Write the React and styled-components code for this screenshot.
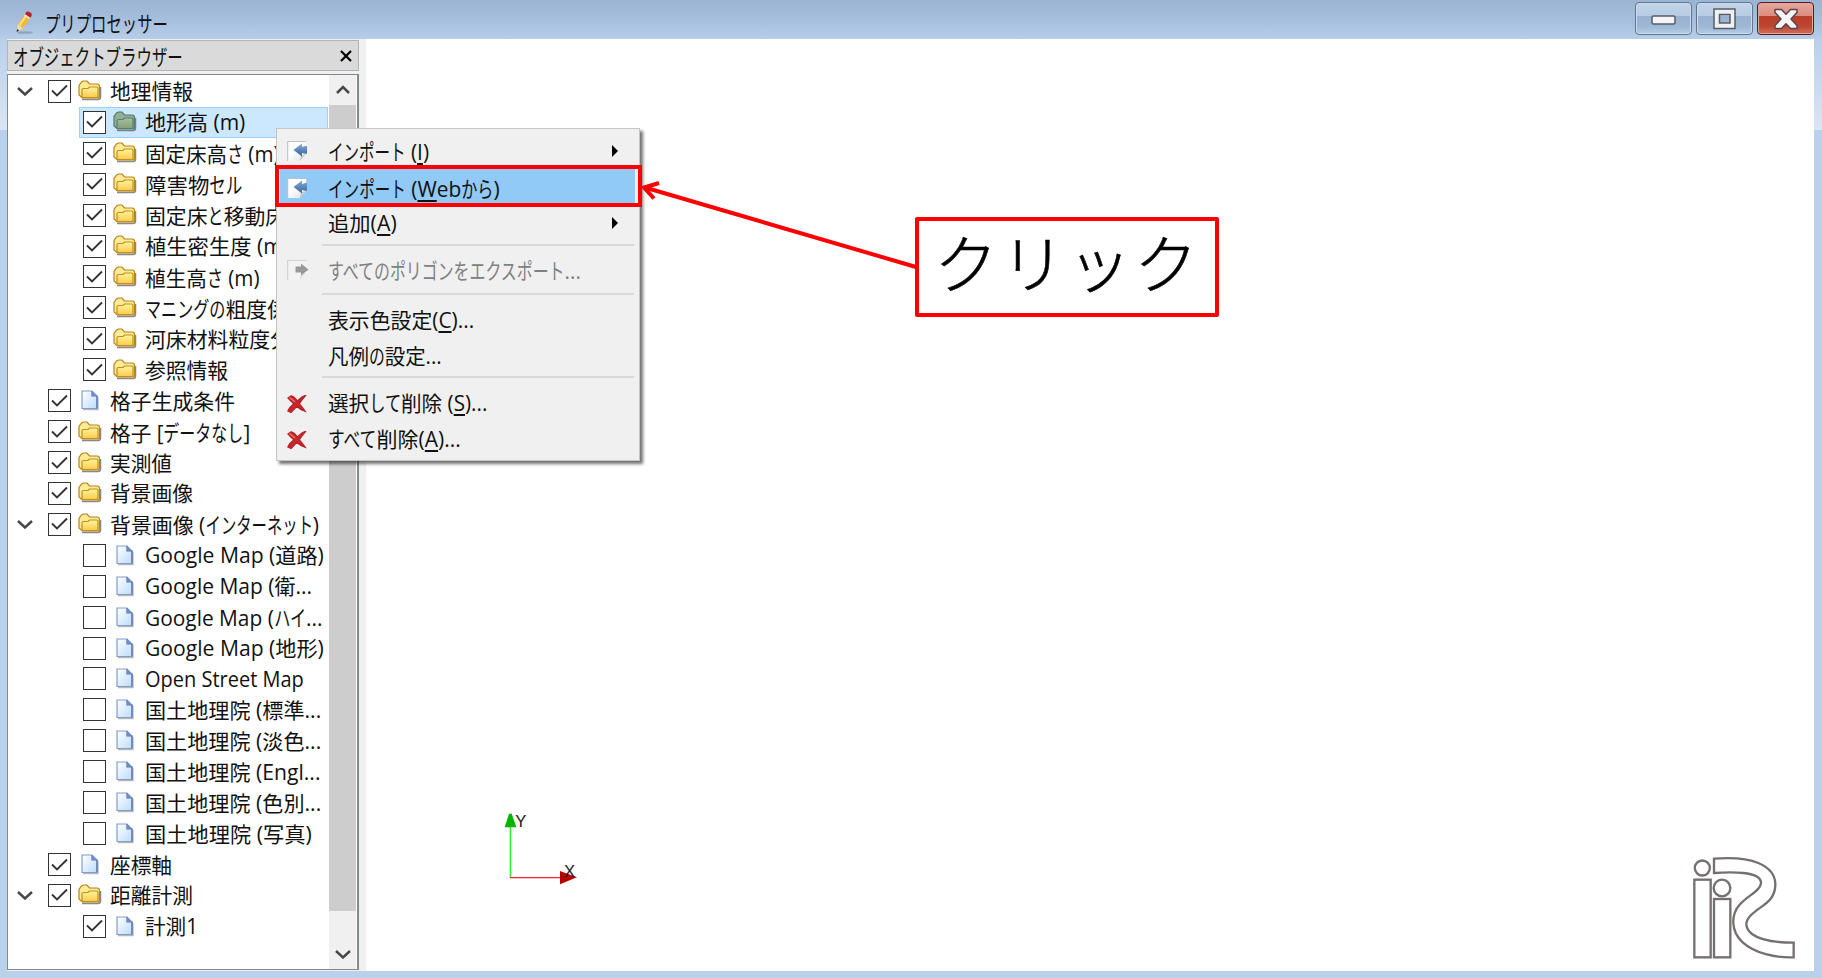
import React, {useLayoutEffect, useRef, useState} from 'react';
import styled, {createGlobalStyle, css} from 'styled-components';

const GlobalStyle = createGlobalStyle`
  * {
    box-sizing: border-box;
  }

  body {
    margin: 0;
    overflow: hidden;
    font-family: "Open Sans", "Noto Sans CJK JP", sans-serif;
    font-size: 21px;
    color: #111;
  }
`;

const Window = styled.div`
  position: relative;
  width: 1822px;
  height: 978px;
  display: flex;
  flex-direction: column;
  background: #b9d1ea;
`;

const TitleBar = styled.header`
  flex: none;
  height: 39px;
  display: flex;
  align-items: flex-start;
  justify-content: space-between;
  padding: 2px 8px 0 14px;
  background: linear-gradient(#9ab4d1, #a5bedc 50%, #b7cee9);
`;

const TitleGroup = styled.div`
  display: flex;
  align-items: center;
  gap: 11px;
  height: 42px;
`;

const WindowButtons = styled.div`
  display: flex;
  gap: 4px;
`;

const WindowButton = styled.button`
  width: 57px;
  height: 33px;
  padding: 0;
  display: flex;
  align-items: center;
  justify-content: center;
  border: 1px solid ${({$close}) => ($close ? '#571b22' : '#62758f')};
  border-radius: 4px;
  box-shadow: inset 0 0 0 1px ${({$close}) => ($close ? '#e3a69b' : '#cbdcee')};
  background: ${({$close}) => ($close
    ? 'linear-gradient(#e7a79b, #dc8b7d 42%, #b93e29 43%, #bd4531 75%, #d07059)'
    : 'linear-gradient(#c1d4e8, #b6cce3 42%, #98b2cf 43%, #9eb8d4 75%, #b3cbe5)')};
`;

const Body = styled.div`
  flex: none;
  height: 932px;
  display: flex;
  padding: 0 8px 0 7px;
  background: linear-gradient(#b9cfe9, #dae6f5 91px, #b9d1ea 91px);
`;

const Dock = styled.aside`
  width: 359px;
  display: flex;
  flex-direction: column;
  gap: 3px;
  padding: 1px 7px 1px 0;
  background: #f0f0f0;
`;

const DockTitle = styled.div`
  flex: none;
  height: 31px;
  display: flex;
  align-items: center;
  justify-content: space-between;
  padding: 0 6px 0 5px;
  border: 1px solid #b4b4b4;
  background: #dadada;
`;

const TreeFrame = styled.div`
  flex: 1;
  min-height: 0;
  display: flex;
  padding-right: 1px;
  border: 1px solid #828790;
  border-right-width: 2px;
  background: #fff;
`;

const Tree = styled.div`
  flex: 1;
  min-width: 0;
  overflow: hidden;
  padding-top: 1px;
`;

const Row = styled.div`
  height: 30.93px;
  display: flex;
  align-items: center;
  padding-left: ${({$level}) => ($level ? 71 : 9)}px;
`;

const RowItem = styled.div`
  flex: 1;
  min-width: 0;
  height: 100%;
  display: flex;
  align-items: center;
  margin-right: 1px;
  padding-left: ${({$level}) => ($level ? 3 : 0)}px;
  border: 1px solid transparent;
  ${({$selected}) => $selected && css`
    border-color: #99d1ff;
    background: #cce8ff;
  `}
`;

const Expander = styled.span`
  width: 30px;
  height: 20px;
  flex: none;
  display: flex;
  align-items: center;
`;

const CheckBox = styled.span`
  width: 23px;
  height: 23px;
  flex: none;
  display: flex;
  align-items: center;
  justify-content: center;
  border: 1.5px solid #333;
  background: #fff;
`;

const IconSlot = styled.span`
  width: 24px;
  height: 24px;
  flex: none;
  display: flex;
  align-items: center;
  justify-content: center;
  margin: 0 8px 0 7px;
  svg {
    flex: none;
  }
`;

const ScrollBar = styled.div`
  width: 27px;
  flex: none;
  display: flex;
  flex-direction: column;
  background: #f0f0f0;
`;

const ScrollButton = styled.div`
  height: 30px;
  display: flex;
  align-items: center;
  justify-content: center;
`;

const Thumb = styled.div`
  height: 806px;
  background: #cdcdcd;
`;

const Track = styled.div`
  flex: 1;
`;

const Canvas = styled.main`
  flex: 1;
  background: #fff;
`;

const Menu = styled.div`
  position: absolute;
  left: 276px;
  top: 128px;
  width: 364px;
  height: 333px;
  padding: 3px 4px 0 3px;
  border: 1px solid #c4c4c4;
  background: #f0f0f0;
  box-shadow: 3px 3px 3px rgba(0, 0, 0, 0.55);
`;

const MenuItem = styled.div`
  height: ${({$h}) => $h}px;
  display: flex;
  align-items: center;
  padding: 0 17px 0 7px;
  color: ${({$disabled}) => ($disabled ? '#808080' : '#111')};
  background: ${({$active}) => ($active ? '#91c9f7' : 'transparent')};
`;

const MenuIcon = styled.span`
  width: 41px;
  height: 22px;
  flex: none;
`;

const MenuArrow = styled.span`
  margin-left: auto;
  border: 6px solid transparent;
  border-left-color: #000;
  border-right-width: 0;
`;

const Separator = styled.div`
  height: 2px;
  margin: ${({$top}) => $top}px 1px ${({$bottom}) => $bottom}px 42px;
  background: #d9d9d9;
`;

const Highlight = styled.div`
  position: absolute;
  left: 275px;
  top: 165px;
  width: 367px;
  height: 42px;
  border: 4px solid #f00;
`;

const Callout = styled.div`
  position: absolute;
  left: 915px;
  top: 217px;
  width: 304px;
  height: 100px;
  padding: 0 0 14px 15px;
  display: flex;
  align-items: center;
  border: 4px solid #f00;
  border-radius: 2px;
  background: #fff;
  font-family: "Noto Sans CJK JP", sans-serif;
  font-size: 64px;
  font-weight: 300;
  letter-spacing: 2.7px;
  white-space: nowrap;
  color: #000;
  -webkit-text-stroke: 0.6px #000;
`;

const Overlay = styled.svg`
  position: absolute;
  left: ${({$x}) => $x}px;
  top: ${({$y}) => $y}px;
  overflow: visible;
`;

const TextBox = styled.span`
  display: block;
  flex: none;
  height: 28px;
  line-height: 28px;
`;

const TextInner = styled.span`
  display: inline-block;
  transform-origin: 0 50%;
  white-space: pre;
`;

const KanaBox = styled.span`
  display: inline-block;
  font-size: 22px;
`;

const Mnemonic = styled.span`
  text-decoration: underline;
  text-decoration-thickness: 1.5px;
  text-underline-offset: 3px;
`;

// scales the run horizontally so that it fills the given width
const Fit = ({width, children}) => {
    const ref = useRef(null);
    const [scale, setScale] = useState(1);

    useLayoutEffect(() => {
        setScale(width / ref.current.offsetWidth);
    }, [width]);

    return <TextInner ref={ref} style={{transform: `scaleX(${scale})`}}>{children}</TextInner>;
};

const KANA = /([\u3040-\u30ff]+)/;

const kanaWidth = (text) => [...text].reduce((sum, c) => sum + ('ッェトょ'.includes(c) ? 13.5 : 16.2), 0);

const Label = ({text, width}) => (
    <TextBox style={{width}}>
        <Fit width={width}>
            {text.split(KANA).map((part, i) => {
                if (KANA.test(part)) {
                    const w = kanaWidth(part);
                    return <KanaBox key={i} style={{width: w}}><Fit width={w}>{part}</Fit></KanaBox>;
                }
                const [before, after] = part.split('&');
                if (after === undefined) return part;
                return <React.Fragment key={i}>{before}<Mnemonic>{after[0]}</Mnemonic>{after.slice(1)}</React.Fragment>;
            })}
        </Fit>
    </TextBox>
);

const Chevron = ({up}) => (
    <svg width="16" height="10" viewBox="0 0 16 10">
        <path d={up ? 'M2 8l6-6 6 6' : 'M1 2l7 6.500 7-6.500'} fill="none" stroke="#484848" strokeWidth="2.500"/>
    </svg>
);

const Folder = ({selected}) => (
    <svg width="24" height="22" viewBox="0 0 24 22">
        <defs>
            <linearGradient id="folder" x1="0" y1="0" x2="0" y2="1">
                <stop offset="0" stopColor="#fff59c"/>
                <stop offset="1" stopColor="#fbcb4c"/>
            </linearGradient>
            <linearGradient id="folderSel" x1="0" y1="0" x2="0" y2="1">
                <stop offset="0" stopColor="#a4c09c"/>
                <stop offset="1" stopColor="#86a07c"/>
            </linearGradient>
        </defs>
        <path d="M4 19.500h16q2.500 0 2.500-2.500V7" fill="none" stroke="#555" strokeWidth="1.500" opacity=".7"/>
        <path d="M1 15V5.500L3.500 2l2-1h3.500l2.500 3h7.500q2.500 0 2.500 2.500V16q0 2-2 2H4.500z"
              fill={selected ? '#93b096' : '#ffeb96'} stroke={selected ? '#527a70' : '#b98418'} strokeWidth="1.200"/>
        <path d="M4 17.500V10q0-1.500 1.500-1.500H10L11.500 7h7q1.500 0 1.500 1.500v7.500q0 1.500-1.500 1.500z"
              fill={selected ? 'url(#folderSel)' : 'url(#folder)'}
              stroke={selected ? '#587f70' : '#c18f1f'} strokeWidth="1.200"/>
    </svg>
);

const Page = () => (
    <svg width="18" height="21" viewBox="0 0 18 21">
        <defs>
            <linearGradient id="page" x1="0" y1="0" x2="1" y2="1">
                <stop offset="0" stopColor="#fff"/>
                <stop offset="1" stopColor="#bcdcff"/>
            </linearGradient>
        </defs>
        <path d="M2 19.500h15V7" fill="none" stroke="#888" strokeWidth="1.300" opacity=".6"/>
        <path d="M1 1h10l5 5v12.500H1z" fill="url(#page)" stroke="#849ccc" strokeWidth="1.200"/>
        <path d="M11 1v5h5v12.500" fill="none" stroke="#5570a8" strokeWidth="1.200"/>
        <path d="M11 1v5h5z" fill="#6f8cc4"/>
    </svg>
);

const Transfer = ({out}) => (
    <svg width="23" height="22" viewBox="0 0 23 22">
        <defs>
            <linearGradient id="sheet" x1="0" y1="0" x2="1" y2="1">
                <stop offset="0.400" stopColor="#fff"/>
                <stop offset="1" stopColor="#d9dde0"/>
            </linearGradient>
            <linearGradient id="blueArrow" x1="0" y1="0" x2="0" y2="1">
                <stop offset="0" stopColor="#86a9d4"/>
                <stop offset="1" stopColor="#3565a0"/>
            </linearGradient>
        </defs>
        <path d="M.7 1.500h18.500v12.500l-6.500 7H.7z" fill={out ? '#f3f3f3' : 'url(#sheet)'}/>
        <path d="M.7 21V1.500h18.500" fill="none" stroke={out ? '#d0d0d0' : '#b5c1cc'} strokeWidth="1.100"/>
        <path d="M12.700 21l1.300-5.500 5-1.500z" fill={out ? '#ddd' : '#c8c8c8'}/>
        {out
            ? <path d="M8.500 7.500h5.500V4.500l7.500 6-7.500 6v-3H8.500z" fill="#999"/>
            : <path d="M20 6h-1.500l-3.500 1V3.500L6.500 10l8.500 6.500V13l3.500.8H20z" fill="url(#blueArrow)"/>}
    </svg>
);

const Cross = () => (
    <svg width="20" height="18" viewBox="0 0 20 18">
        <path d="M1 3L4 .8Q7 1 10.500 6 15 1 18.500.5 15.500 4 12.300 8.700 15 12 18.500 16.500 14 15.500 9.700 11.300 7 14.500 4 17.500L.8 16Q3 11.500 6.800 8.700 3.500 5.800 1 3z"
              fill="#c8262b" stroke="#b32226" strokeWidth="1.200"/>
        <path d="M2.500 2.500L8 7" stroke="#ef6d6a" strokeWidth="1.600"/>
    </svg>
);

const Pencil = () => (
    <svg width="20" height="24" viewBox="0 0 20 24">
        <ellipse cx="11" cy="21.500" rx="8" ry="1.300" fill="#6e7f92" opacity=".5"/>
        <path d="M4 13L11.500 2.500l5 3.500L8.800 17.500 3 20.500z" fill="#f8b92c"/>
        <path d="M5.600 14L13 3.500" stroke="#ffe08a" strokeWidth="2"/>
        <path d="M4 13l4.800 4.500L3 20.500z" fill="#f3dcae"/>
        <path d="M3.300 18l1.800 1.600L2.500 21z" fill="#222"/>
        <path d="M11 3.200L12.600.8q2-.8 5 1.600.8 1.500-1 4z" fill="#b7202c"/>
        <path d="M10.400 4l5.200 3.700" stroke="#e9e9e9" strokeWidth="1.400"/>
    </svg>
);

const MinimizeGlyph = () => (
    <svg width="25" height="15" viewBox="0 -4 25 15">
        <rect x="1" y="1" width="23" height="8" rx="1.500" fill="#f4f4f4" stroke="#555c69" strokeWidth="1.500"/>
    </svg>
);

const MaximizeGlyph = () => (
    <svg width="25" height="22" viewBox="0 0 25 22">
        <path fillRule="evenodd" d="M2 1h21v19.500H2zM7.500 6.500h10.500v8.500H7.500z" fill="#f0f0f0" stroke="#555c69" strokeWidth="1.500"/>
    </svg>
);

const CloseGlyph = () => (
    <svg width="26" height="22" viewBox="0 0 26 22">
        <path d="M2 1.500h6.500l4.500 4.800 4.500-4.800H24v3L18 11l6 6.500v3h-6.500L13 15.700 8.500 20.500H2v-3L8 11 2 4.500z"
              fill="#f4f4f4" stroke="#5a4450" strokeWidth="1.500" strokeLinejoin="round"/>
    </svg>
);

const rows = [
    {text: '地理情報', width: 83, level: 0, icon: 'folder', open: true, checked: true},
    {text: '地形高 (m)', width: 100, level: 1, icon: 'folder', checked: true, selected: true},
    {text: '固定床高さ (m)', width: 134, level: 1, icon: 'folder', checked: true},
    {text: '障害物セル', width: 97, level: 1, icon: 'folder', checked: true},
    {text: '固定床と移動床', width: 141, level: 1, icon: 'folder', checked: true},
    {text: '植生密生度 (m)', width: 144, level: 1, icon: 'folder', checked: true},
    {text: '植生高さ (m)', width: 114, level: 1, icon: 'folder', checked: true},
    {text: 'マニングの粗度係', width: 143, level: 1, icon: 'folder', checked: true},
    {text: '河床材料粒度分', width: 146, level: 1, icon: 'folder', checked: true},
    {text: '参照情報', width: 83, level: 1, icon: 'folder', checked: true},
    {text: '格子生成条件', width: 125, level: 0, icon: 'page', checked: true},
    {text: '格子 [データなし]', width: 140, level: 0, icon: 'folder', checked: true},
    {text: '実測値', width: 62, level: 0, icon: 'folder', checked: true},
    {text: '背景画像', width: 83, level: 0, icon: 'folder', checked: true},
    {text: '背景画像 (インターネット)', width: 209, level: 0, icon: 'folder', open: true, checked: true},
    {text: 'Google Map (道路)', width: 179, level: 1, icon: 'page'},
    {text: 'Google Map (衛...', width: 167, level: 1, icon: 'page'},
    {text: 'Google Map (ハイ...', width: 178, level: 1, icon: 'page'},
    {text: 'Google Map (地形)', width: 179, level: 1, icon: 'page'},
    {text: 'Open Street Map', width: 159, level: 1, icon: 'page'},
    {text: '国土地理院 (標準...', width: 176, level: 1, icon: 'page'},
    {text: '国土地理院 (淡色...', width: 176, level: 1, icon: 'page'},
    {text: '国土地理院 (Engl...', width: 175, level: 1, icon: 'page'},
    {text: '国土地理院 (色別...', width: 176, level: 1, icon: 'page'},
    {text: '国土地理院 (写真)', width: 167, level: 1, icon: 'page'},
    {text: '座標軸', width: 62, level: 0, icon: 'page', checked: true},
    {text: '距離計測', width: 83, level: 0, icon: 'folder', open: true, checked: true},
    {text: '計測1', width: 53, level: 1, icon: 'page', checked: true},
];

const TreeRow = ({row}) => (
    <Row $level={row.level}>
        {row.level === 0 && <Expander>{row.open && <Chevron/>}</Expander>}
        <RowItem $level={row.level} $selected={row.selected}>
            <CheckBox>
                {row.checked && (
                    <svg width="17" height="14" viewBox="0 0 17 14">
                        <path d="M1 6.500l5 5L16 1.500" fill="none" stroke="#333" strokeWidth="1.900"/>
                    </svg>
                )}
            </CheckBox>
            <IconSlot>{row.icon === 'folder' ? <Folder selected={row.selected}/> : <Page/>}</IconSlot>
            <Label text={row.text} width={row.width}/>
        </RowItem>
    </Row>
);

const ContextMenu = () => (
    <Menu>
        <MenuItem $h={37}>
            <MenuIcon><Transfer/></MenuIcon>
            <Label text="インポート (&I)" width={101}/>
            <MenuArrow/>
        </MenuItem>
        <MenuItem $h={37} $active>
            <MenuIcon><Transfer/></MenuIcon>
            <Label text="インポート (&Webから)" width={172}/>
        </MenuItem>
        <MenuItem $h={34}>
            <MenuIcon/>
            <Label text="追加(&A)" width={69}/>
            <MenuArrow/>
        </MenuItem>
        <Separator $top={4} $bottom={0}/>
        <MenuItem $h={47} $disabled>
            <MenuIcon><Transfer out/></MenuIcon>
            <Label text="すべてのポリゴンをエクスポート..." width={253}/>
        </MenuItem>
        <Separator $top={0} $bottom={7}/>
        <MenuItem $h={36}>
            <MenuIcon/>
            <Label text="表示色設定(&C)..." width={146}/>
        </MenuItem>
        <MenuItem $h={34}>
            <MenuIcon/>
            <Label text="凡例の設定..." width={114}/>
        </MenuItem>
        <Separator $top={4} $bottom={6}/>
        <MenuItem $h={36}>
            <MenuIcon><Cross/></MenuIcon>
            <Label text="選択して削除 (&S)..." width={159}/>
        </MenuItem>
        <MenuItem $h={36}>
            <MenuIcon><Cross/></MenuIcon>
            <Label text="すべて削除(&A)..." width={133}/>
        </MenuItem>
    </Menu>
);

const AxisMarker = () => (
    <Overlay $x={480} $y={790} width="120" height="120" viewBox="0 0 360 360">
        <path d="M91 108V264" stroke="#2f2" strokeWidth="4"/>
        <path d="M90 263H242" stroke="#f22" strokeWidth="4"/>
        <path d="M74 112l13-41h8l14 41z" fill="#00b400"/>
        <path d="M240 243l51 19-51 21z" fill="#b40000"/>
        <g fontFamily="Liberation Sans, sans-serif" fontSize="50" fill="#222">
            <text x="106" y="112">Y</text>
            <text x="252" y="261">X</text>
        </g>
    </Overlay>
);

const Logo = () => (
    <Overlay $x={1660} $y={830} width="162" height="148" viewBox="0 0 486 444">
        <g fill="none" stroke="#757070" strokeWidth="7">
            <circle cx="127" cy="114" r="22.500"/>
            <rect x="103" y="149" width="49" height="233"/>
            <circle cx="186" cy="174" r="25"/>
            <rect x="162" y="207" width="49" height="175"/>
            <path d="M162 86C215 82 260 84 295 99C335 116 347 140 346 166C344 208 318 220 286 244C254 268 250 290 276 312C300 330 350 338 401 338V382C345 384 285 370 248 337C212 304 212 254 240 223C264 196 300 184 303 160C304 142 280 132 250 129C220 126 190 127 162 129Z"/>
        </g>
    </Overlay>
);

const App = () => (
    <>
        <GlobalStyle/>
        <Window>
            <TitleBar>
                <TitleGroup>
                    <Pencil/>
                    <Label text="プリプロセッサー" width={123}/>
                </TitleGroup>
                <WindowButtons>
                    <WindowButton><MinimizeGlyph/></WindowButton>
                    <WindowButton><MaximizeGlyph/></WindowButton>
                    <WindowButton $close><CloseGlyph/></WindowButton>
                </WindowButtons>
            </TitleBar>
            <Body>
                <Dock>
                    <DockTitle>
                        <Label text="オブジェクトブラウザー" width={170}/>
                        <svg width="12" height="12" viewBox="0 0 12 12">
                            <path d="M1 1l10 10M11 1L1 11" stroke="#000" strokeWidth="2.200"/>
                        </svg>
                    </DockTitle>
                    <TreeFrame>
                        <Tree>
                            {rows.map((row) => <TreeRow key={row.text} row={row}/>)}
                        </Tree>
                        <ScrollBar>
                            <ScrollButton><Chevron up/></ScrollButton>
                            <Thumb/>
                            <Track/>
                            <ScrollButton><Chevron/></ScrollButton>
                        </ScrollBar>
                    </TreeFrame>
                </Dock>
                <Canvas/>
            </Body>
            <AxisMarker/>
            <Logo/>
            <ContextMenu/>
            <Highlight/>
            <Callout>クリック</Callout>
            <Overlay $x={640} $y={180} width="280" height="95" viewBox="640 180 280 95">
                <path d="M916 267L645 187.500M659 183L644 187.500L654 198.500" fill="none" stroke="#f00" strokeWidth="4"/>
            </Overlay>
        </Window>
    </>
);

export default App;
